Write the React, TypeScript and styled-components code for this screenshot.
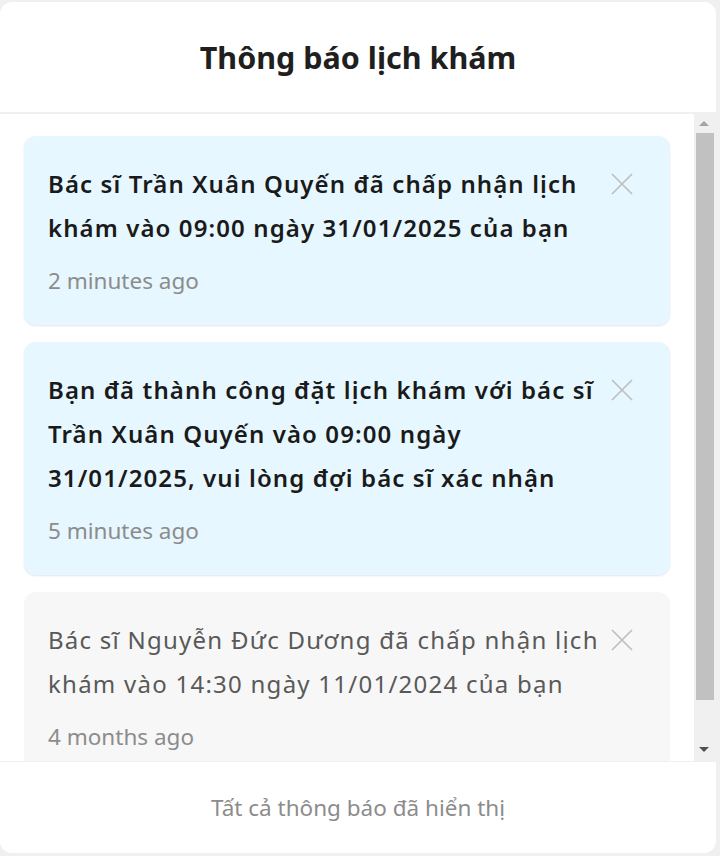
import * as React from 'react'
import styled, { createGlobalStyle } from 'styled-components'

interface Notice {
  id: number
  message: string
  time: string
  unread: boolean
}

const notices: Notice[] = [
  {
    id: 1,
    message: 'Bác sĩ Trần Xuân Quyến đã chấp nhận lịch khám vào 09:00 ngày 31/01/2025 của bạn',
    time: '2 minutes ago',
    unread: true,
  },
  {
    id: 2,
    message: 'Bạn đã thành công đặt lịch khám với bác sĩ Trần Xuân Quyến vào 09:00 ngày 31/01/2025, vui lòng đợi bác sĩ xác nhận',
    time: '5 minutes ago',
    unread: true,
  },
  {
    id: 3,
    message: 'Bác sĩ Nguyễn Đức Dương đã chấp nhận lịch khám vào 14:30 ngày 11/01/2024 của bạn',
    time: '4 months ago',
    unread: false,
  },
]

const CloseIcon = () => (
  <svg width="22" height="22" viewBox="0 0 22 22">
    <path d="M1 1 L21 21 M21 1 L1 21" stroke="#bfbfbf" strokeWidth="1.7" fill="none" />
  </svg>
)

const App = () => {
  return (
    <>
      <GlobalStyle />
      <Modal>
        <Header>
          <Title>Thông báo lịch khám</Title>
        </Header>
        <Body>
          <List>
            {notices.map(n => (
              <Card key={n.id} unread={n.unread}>
                <Row>
                  <Message unread={n.unread}>{n.message}</Message>
                  <CloseButton aria-label="close">
                    <CloseIcon />
                  </CloseButton>
                </Row>
                <Time>{n.time}</Time>
              </Card>
            ))}
          </List>
          <ScrollBar>
            <Arrow dir="up" />
            <Track>
              <Thumb size={567} />
            </Track>
            <Arrow dir="down" />
          </ScrollBar>
        </Body>
        <Footer>Tất cả thông báo đã hiển thị</Footer>
      </Modal>
    </>
  )
}

export default App

const GlobalStyle = createGlobalStyle`
  html, body {
    margin: 0;
    padding: 0;
    background: #f0f0f0;
  }
  body {
    font-family: "Noto Sans", "Open Sans", sans-serif;
  }
  * {
    box-sizing: border-box;
  }
`

const Modal = styled.div`
  width: 716px;
  height: 851px;
  margin-top: 2px;
  background: #fff;
  border-radius: 12px;
  display: flex;
  flex-direction: column;
  overflow: hidden;
`

const Header = styled.div`
  height: 112px;
  flex-shrink: 0;
  display: flex;
  align-items: center;
  justify-content: center;
  border-bottom: 2px solid #f0f0f0;
`

const Title = styled.h2`
  margin: 0;
  font-size: 30.5px;
  font-weight: 700;
  color: #1f1f1f;
`

const Body = styled.div`
  flex: 1;
  min-height: 0;
  display: flex;
`

const List = styled.div`
  flex: 1;
  overflow: hidden;
  padding: 22px 24px 30px;
  display: flex;
  flex-direction: column;
  gap: 17px;
  background: #fff;
`

const ScrollBar = styled.div`
  width: 22px;
  flex-shrink: 0;
  display: flex;
  flex-direction: column;
  background: #f0f0f0;
`

const Arrow = styled.div<{ dir: 'up' | 'down' }>`
  height: 17px;
  flex-shrink: 0;
  display: flex;
  justify-content: center;
  padding-top: ${p => (p.dir === 'up' ? '7px' : '3px')};
  padding-right: 2px;

  &::before {
    content: '';
    width: 0;
    height: 0;
    border-left: 5px solid transparent;
    border-right: 5px solid transparent;
    ${p =>
      p.dir === 'up'
        ? 'border-bottom: 5px solid #a3a3a3;'
        : 'border-top: 5px solid #505050;'}
  }
`

const Track = styled.div`
  flex: 1;
  padding: 2px 2px 0;
`

const Thumb = styled.div<{ size: number }>`
  height: ${p => p.size}px;
  background: #c1c1c1;
`

const Card = styled.div<{ unread: boolean }>`
  flex-shrink: 0;
  background: ${p => (p.unread ? '#e6f7ff' : '#f7f7f7')};
  border-radius: 12px;
  padding: 26px 36px 29px 24px;
  box-shadow: ${p => (p.unread ? '0 1px 2px rgba(0, 40, 80, 0.12)' : 'none')};
`

const Row = styled.div`
  display: flex;
  align-items: flex-start;
  gap: 10px;
`

const Message = styled.div<{ unread: boolean }>`
  flex: 1;
  font-size: 24px;
  line-height: 44px;
  letter-spacing: ${p => (p.unread ? '1.1px' : '1.25px')};
  font-weight: ${p => (p.unread ? 600 : 400)};
  color: ${p => (p.unread ? '#1a1a1a' : '#595959')};
`

const CloseButton = styled.button`
  flex-shrink: 0;
  width: 24px;
  height: 44px;
  padding: 0;
  border: none;
  background: transparent;
  display: flex;
  align-items: center;
  justify-content: center;
  cursor: pointer;
`

const Time = styled.div`
  margin-top: 16px;
  font-size: 22.5px;
  line-height: 30px;
  color: #8c8c8c;
`

const Footer = styled.div`
  height: 92px;
  flex-shrink: 0;
  border-top: 1px solid #f0f0f0;
  display: flex;
  align-items: center;
  justify-content: center;
  font-size: 22.5px;
  color: #8c8c8c;
`
